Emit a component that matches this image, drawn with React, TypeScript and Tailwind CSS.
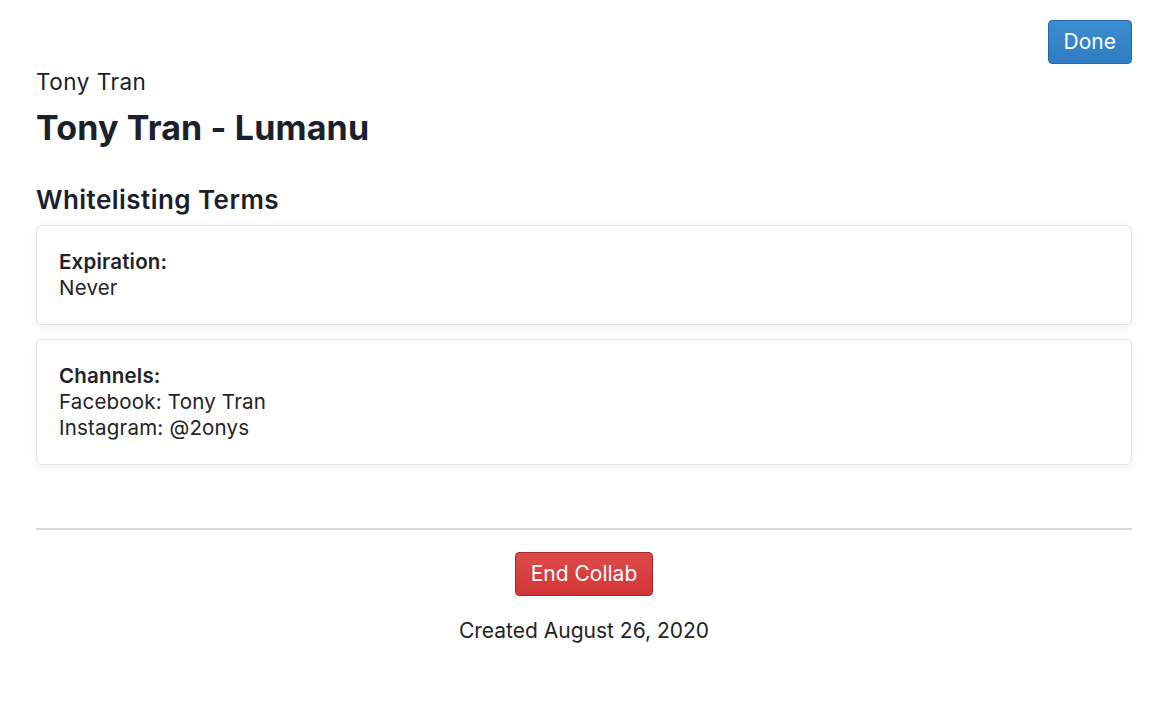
import React from 'react';

type Term = { label: string; lines: string[] };

const terms: Term[] = [
  { label: 'Expiration:', lines: ['Never'] },
  { label: 'Channels:', lines: ['Facebook: Tony Tran', 'Instagram: @2onys'] },
];

function TermCard({ term }: { term: Term }) {
  return (
    <div className="rounded-md border border-[#e3e3e3] bg-white px-[22px] py-[23px] shadow-[0_2px_10px_rgba(0,0,0,0.06)]">
      <div className="font-semibold text-[20.5px] leading-[26px] tracking-[0.2px] text-[#1f2328]">{term.label}</div>
      {term.lines.map((line) => (
        <div key={line} className="text-[20.5px] leading-[26px] tracking-[0.2px] text-[#1f2328]">
          {line}
        </div>
      ))}
    </div>
  );
}

export default function App() {
  return (
    <div className="min-h-[716px] bg-white pl-9 pr-7 pt-5 font-['Inter',sans-serif] text-[#1a202c]">
      <div className="flex justify-end">
        <button className="h-11 rounded border border-[#2868a6] bg-gradient-to-b from-[#3a8dd2] to-[#2f7dc0] px-[15px] text-[21px] text-white">
          Done
        </button>
      </div>
      <div className="mt-[3px] text-[22.5px] leading-[30px] tracking-[0.5px]">Tony Tran</div>
      <h1 className="mt-[11px] text-[34px] font-bold leading-[40px] tracking-[0.15px]">Tony Tran - Lumanu</h1>
      <h2 className="mt-[36px] text-[26px] font-semibold leading-[32px] tracking-[0.45px]">Whitelisting Terms</h2>
      <div className="mt-[9px] flex flex-col gap-[14px]">
        {terms.map((t) => (
          <TermCard key={t.label} term={t} />
        ))}
      </div>
      <hr className="mt-[63px] border-t-2 border-[#d9d9d9]" />
      <div className="mt-[22px] flex flex-col items-center">
        <button className="h-11 rounded border border-[#a52a2a] bg-gradient-to-b from-[#dd4a4a] to-[#d13636] px-[15px] text-[21px] text-white">
          End Collab
        </button>
        <div className="mt-[22px] text-[21px] leading-[26px] text-[#1f2328]">Created August 26, 2020</div>
      </div>
    </div>
  );
}
